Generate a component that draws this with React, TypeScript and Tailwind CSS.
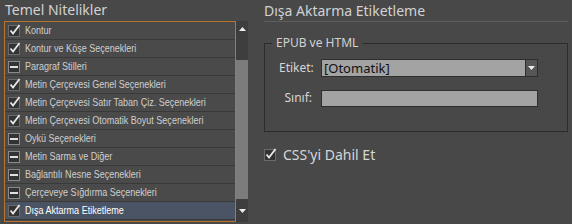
import React from "react";

const ROWS: { label: string; state: "on" | "mixed"; sel?: boolean }[] = [
  { label: "Kontur", state: "on" },
  { label: "Kontur ve Köşe Seçenekleri", state: "on" },
  { label: "Paragraf Stilleri", state: "mixed" },
  { label: "Metin Çerçevesi Genel Seçenekleri", state: "on" },
  { label: "Metin Çerçevesi Satır Taban Çiz. Seçenekleri", state: "on" },
  { label: "Metin Çerçevesi Otomatik Boyut Seçenekleri", state: "on" },
  { label: "Oykü Seçenekleri", state: "mixed" },
  { label: "Metin Sarma ve Diğer", state: "mixed" },
  { label: "Bağlantılı Nesne Seçenekleri", state: "mixed" },
  { label: "Çerçeveye Sığdırma Seçenekleri", state: "mixed" },
  { label: "Dışa Aktarma Etiketleme", state: "on", sel: true },
];

function Check() {
  return (
    <svg width="13" height="13" viewBox="0 0 13 13" className="shrink-0">
      <rect x="0.5" y="1.5" width="11" height="11" fill="#333" stroke="#6a6a6a" />
      <path d="M2.5 6.5 L5 9.5 L11.5 1" fill="none" stroke="#e8e8e8" strokeWidth="1.8" />
    </svg>
  );
}

function Mixed() {
  return (
    <svg width="13" height="13" viewBox="0 0 13 13" className="shrink-0">
      <rect x="0.5" y="1.5" width="11" height="11" fill="#333" stroke="#8a8a8a" />
      <rect x="2" y="6" width="8" height="2" fill="#e0e0e0" />
    </svg>
  );
}

export default function App() {
  return (
    <div className="flex h-[224px] w-[572px] bg-[#484848] text-[#d6d6d6]" style={{ fontFamily: '"Noto Sans", "Open Sans", sans-serif' }}>
      <div className="flex w-[250px] shrink-0 flex-col">
        <div className="h-[21px] pl-[5px] text-[14px] leading-[19px] text-[#d2d2d2]">Temel Nitelikler</div>
        <div className="ml-[4px] flex h-[201px] w-[244px]">
          <div className="flex w-[232px] flex-col border border-[#b8742c] bg-[#4a4a4a]">
            {ROWS.map((r) => (
              <div
                key={r.label}
                className={`flex h-[18px] items-center gap-[4px] overflow-hidden border-b border-[#393939] pl-[3px] font-['Liberation_Sans',sans-serif] text-[11px] ${r.sel ? "bg-[#4b5465] text-white" : "text-[#cfcfcf]"}`}
              >
                {r.state === "on" ? <Check /> : <Mixed />}
                <span className="origin-left scale-x-[0.82] whitespace-nowrap">{r.label}</span>
              </div>
            ))}
          </div>
          <div className="flex w-[12px] flex-col bg-[#3e3e3e]">
            <div className="flex h-[16px] items-center justify-center">
              <svg width="7" height="4" viewBox="0 0 7 4"><path d="M0 4 L3.5 0 L7 4 Z" fill="#eee" /></svg>
            </div>
            <div className="h-[23px]" />
            <div className="h-[139px] bg-[#7c7c7c]" />
            <div className="flex flex-1 items-center justify-center">
              <svg width="7" height="4" viewBox="0 0 7 4"><path d="M0 0 L3.5 4 L7 0 Z" fill="#eee" /></svg>
            </div>
          </div>
        </div>
      </div>
      <div className="flex flex-1 flex-col pl-[14px] pr-[4px]">
        <div className="h-[22px] border-b border-[#5e5e5e] pt-[1px] text-[14px] leading-[19px] text-[#d2d2d2]">Dışa Aktarma Etiketleme</div>
        <fieldset className="mt-[14px] h-[96px] border border-[#2c2c2c] px-[14px] pb-[4px]">
          <legend className="ml-[-7px] px-[4px] text-[12px] leading-[14px] text-[#d2d2d2]">EPUB ve HTML</legend>
          <div className="mt-[9px] flex items-center gap-[9px]">
            <span className="w-[33px] text-right text-[12px]">Etiket:</span>
            <div className="flex h-[18px] w-[217px] items-center border border-[#2e2e2e] bg-[#a3a3a3]">
              <span className="flex-1 pl-[2px] text-[13px] leading-[16px] text-[#111]">[Otomatik]</span>
              <div className="flex h-full w-[12px] items-center justify-center border-l border-[#2e2e2e] bg-[#565656]">
                <svg width="7" height="4" viewBox="0 0 7 4"><path d="M0 0 L3.5 4 L7 0 Z" fill="#eee" /></svg>
              </div>
            </div>
          </div>
          <div className="mt-[12px] flex items-center gap-[9px]">
            <span className="w-[33px] text-right text-[12px]">Sınıf:</span>
            <div className="h-[17px] w-[217px] border border-[#2e2e2e] bg-[#a3a3a3]" />
          </div>
        </fieldset>
        <div className="mt-[12px] flex items-center gap-[6px] text-[14px]">
          <Check />
          <span>CSS'yi Dahil Et</span>
        </div>
      </div>
    </div>
  );
}
